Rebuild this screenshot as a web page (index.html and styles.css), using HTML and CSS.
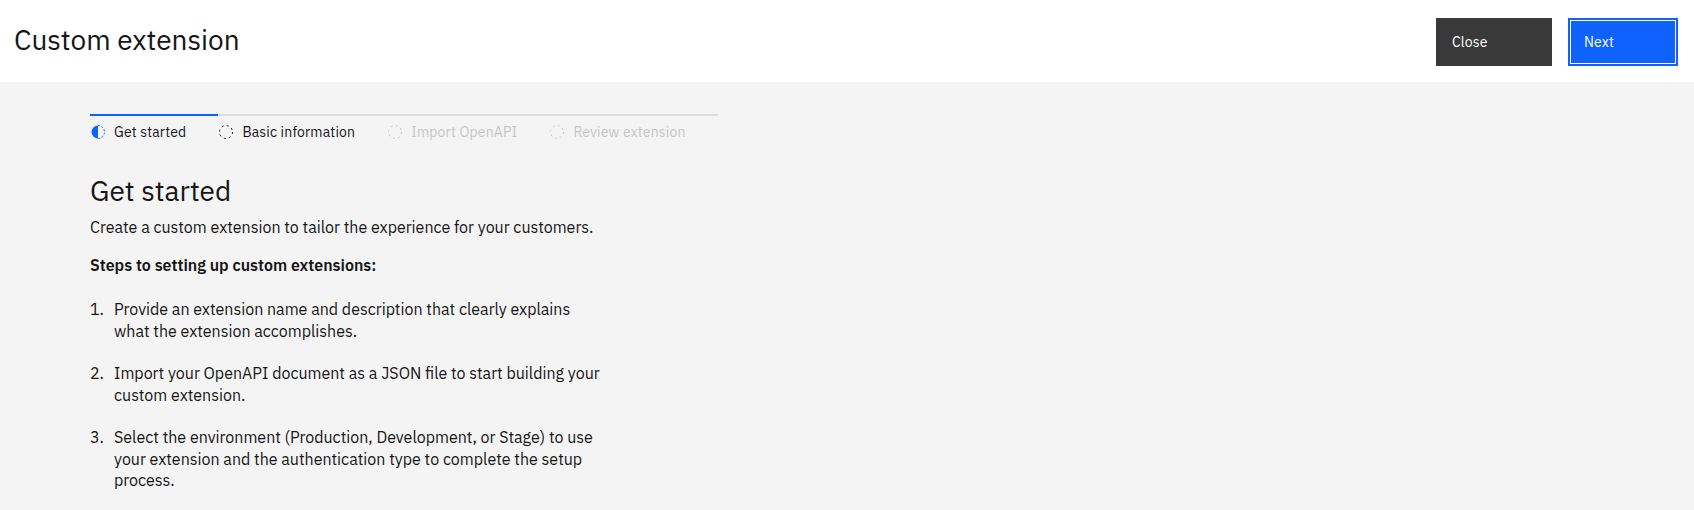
FILE: index.html
```html
<!DOCTYPE html>
<html lang="en">
<head>
<meta charset="utf-8">
<title>Custom extension</title>
<link rel="stylesheet" href="styles.css">
</head>
<body>
<header class="topbar">
  <h1 class="title">Custom extension</h1>
  <div class="actions">
    <button class="btn btn-secondary" type="button">Close</button>
    <button class="btn btn-primary" type="button">Next</button>
  </div>
</header>
<main class="content">
  <ol class="progress">
    <li class="step step-current">
      <svg class="step-icon" viewBox="0 0 16 16" width="16" height="16" aria-hidden="true">
        <path d="M8 1.5 A6.5 6.5 0 0 0 8 14.5 Z" fill="#0f62fe"/>
        <path d="M8 1.5 A6.5 6.5 0 0 1 8 14.5" fill="none" stroke="#0f62fe" stroke-width="1" stroke-dasharray="2 1.5"/>
      </svg>
      <span class="step-label">Get started</span>
    </li>
    <li class="step">
      <svg class="step-icon" viewBox="0 0 16 16" width="16" height="16" aria-hidden="true">
        <circle cx="8" cy="8" r="6.5" fill="none" stroke="currentColor" stroke-width="1" stroke-dasharray="2 3.1"/>
      </svg>
      <span class="step-label">Basic information</span>
    </li>
    <li class="step step-disabled">
      <svg class="step-icon" viewBox="0 0 16 16" width="16" height="16" aria-hidden="true">
        <circle cx="8" cy="8" r="6.5" fill="none" stroke="currentColor" stroke-width="1" stroke-dasharray="2 3.1"/>
      </svg>
      <span class="step-label">Import OpenAPI</span>
    </li>
    <li class="step step-disabled">
      <svg class="step-icon" viewBox="0 0 16 16" width="16" height="16" aria-hidden="true">
        <circle cx="8" cy="8" r="6.5" fill="none" stroke="currentColor" stroke-width="1" stroke-dasharray="2 3.1"/>
      </svg>
      <span class="step-label">Review extension</span>
    </li>
  </ol>

  <h2 class="heading">Get started</h2>
  <p class="intro">Create a custom extension to tailor the experience for your customers.</p>
  <p class="steps-title">Steps to setting up custom extensions:</p>
  <ol class="steps-list">
    <li class="item"><span class="num">1.</span><span class="text">Provide an extension name and description that clearly explains what the extension accomplishes.</span></li>
    <li class="item"><span class="num">2.</span><span class="text">Import your OpenAPI document as a JSON file to start building your custom extension.</span></li>
    <li class="item"><span class="num">3.</span><span class="text">Select the environment (Production, Development, or Stage) to use your extension and the authentication type to complete the setup process.</span></li>
  </ol>
</main>
</body>
</html>
```

FILE: styles.css
```css
* { box-sizing: border-box; }

html, body {
  margin: 0;
  padding: 0;
}

body {
  width: 1694px;
  height: 510px;
  overflow: hidden;
  background: #f4f4f4;
  color: #161616;
  font-family: "IBM Plex Sans", "Open Sans", "Noto Sans", sans-serif;
  font-size: 16px;
}

.topbar {
  height: 82px;
  background: #ffffff;
  display: flex;
  justify-content: space-between;
  align-items: flex-start;
  padding: 0 16px 0 14px;
}

.title {
  margin: 0;
  padding-top: 22px;
  font-size: 28px;
  line-height: 36px;
  font-weight: 400;
  color: #161616;
}

.actions {
  display: flex;
  gap: 16px;
  margin-top: 18px;
}

.btn {
  height: 48px;
  border: 0;
  font-family: inherit;
  font-size: 14px;
  line-height: 18px;
  letter-spacing: 0.16px;
  text-align: left;
  padding: 0 16px;
  color: #ffffff;
  cursor: pointer;
  display: flex;
  align-items: center;
}

.btn-secondary {
  width: 116px;
  background: #393939;
}

.btn-primary {
  width: 110px;
  background: #0f62fe;
  border: 2px solid #0f62fe;
  box-shadow: inset 0 0 0 1px #ffffff;
  padding-left: 14px;
}

.content {
  padding: 32px 0 0 90px;
}

.progress {
  list-style: none;
  margin: 0;
  padding: 0;
  display: flex;
}

.step {
  min-width: 128px;
  border-top: 2px solid #dcdcdc;
  padding: 8px 32px 0 0;
  display: flex;
  align-items: center;
  gap: 8px;
  color: #161616;
  font-size: 14px;
  letter-spacing: 0.16px;
}

.step-current {
  border-top-color: #0f62fe;
}

.step-disabled {
  color: #c6c6c6;
}

.step-icon {
  flex: none;
  display: block;
}

.step-label {
  line-height: 16px;
  white-space: nowrap;
}

.heading {
  margin: 33px 0 0;
  font-size: 28px;
  line-height: 36px;
  font-weight: 400;
}

.intro {
  margin: 8px 0 0;
  line-height: 21.5px;
}

.steps-title {
  margin: 16.5px 0 0;
  font-weight: 600;
  line-height: 21.5px;
}

.steps-list {
  list-style: none;
  margin: 22.5px 0 0;
  padding: 0;
  display: flex;
  flex-direction: column;
  gap: 21px;
}

.item {
  display: flex;
  line-height: 21.5px;
}

.num {
  flex: none;
  width: 24px;
}

.text {
  width: 490px;
}
```
